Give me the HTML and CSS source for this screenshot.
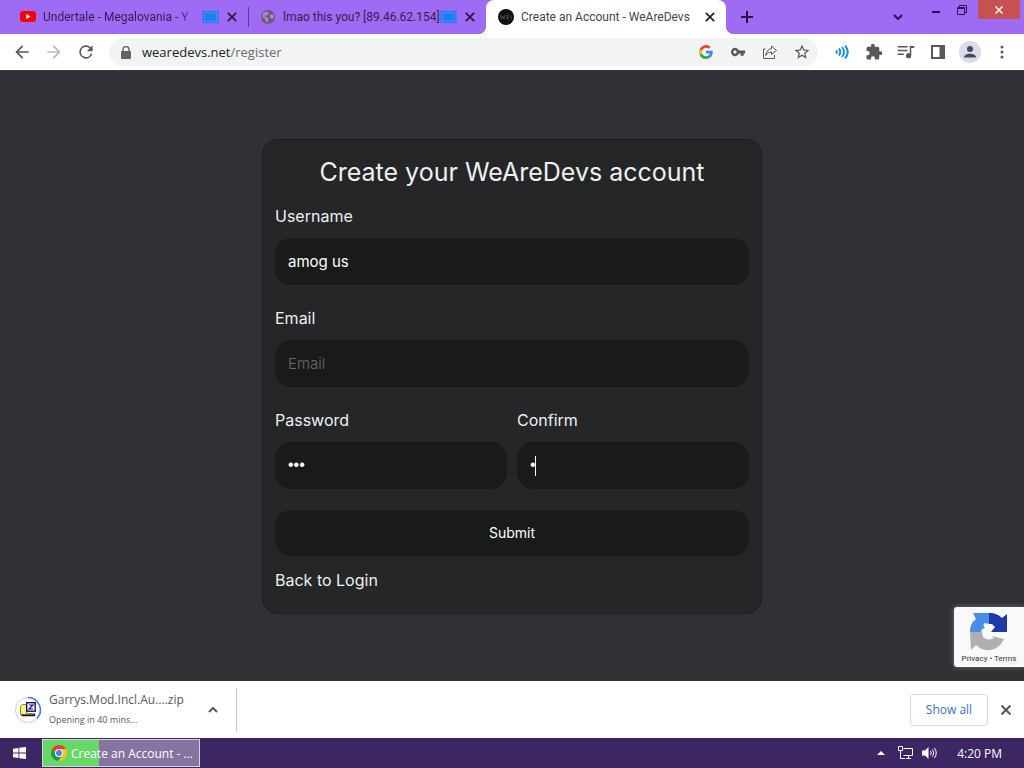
FILE: index.html
```html
<!DOCTYPE html>
<html lang="en">
<head>
<meta charset="UTF-8" />
<meta name="viewport" content="width=device-width, initial-scale=1" />
<title>Create an Account - WeAreDevs</title>
<link rel="stylesheet" href="styles.css">
</head>
<body>
  <!-- Tab strip -->
  <header class="tabstrip">
    <div class="tab">
      <svg class="favicon" viewBox="0 0 16 16"><rect y="2" width="16" height="11" rx="3" fill="#f00"/><path d="M6.3 5v5l4.2-2.500z" fill="#fff"/></svg>
      <span class="tab-title fade">Undertale - Megalovania - Y</span>
      <svg class="cast" viewBox="0 0 18 14"><rect x="1" y="1" width="16" height="12" fill="#1a7ff0" stroke="#1a7ff0"/><rect x="2.500" y="2.500" width="13" height="9" fill="none" stroke="#5b8cf5"/></svg>
      <button class="tab-close" aria-label="Close tab"><svg viewBox="0 0 10 10"><path d="M1.500 1.500l7 7M8.500 1.500l-7 7"/></svg></button>
    </div>
    <div class="tab tab-second">
      <svg class="favicon" viewBox="0 0 16 16"><circle cx="8" cy="8" r="7" fill="#6a5a80"/><path d="M3 4.500c2-2 3.500-2 4.500-1.500L9 5 6.500 6.500 5 6.300 4.500 7.500 8 9l.5 2L7 13.500 5.500 12 5 9.500 2.500 8zM10 6l3.500-.5.2 3L12 10l-2-1.500z" fill="#a88ec8"/></svg>
      <span class="tab-title">lmao this you? [89.46.62.154]</span>
      <svg class="cast" viewBox="0 0 18 14"><rect x="1" y="1" width="16" height="12" fill="#1a7ff0" stroke="#1a7ff0"/><rect x="2.500" y="2.500" width="13" height="9" fill="none" stroke="#5b8cf5"/></svg>
      <button class="tab-close" aria-label="Close tab"><svg viewBox="0 0 10 10"><path d="M1.500 1.500l7 7M8.500 1.500l-7 7"/></svg></button>
    </div>
    <div class="tab active">
      <svg class="favicon" viewBox="0 0 16 16"><circle cx="8" cy="8" r="8" fill="#111"/><path d="M2.500 6l1 4 1.200-3 1.200 3 1-4M9 6v4M9 6h2M9 8h2M9 10h2M12.500 6l1 4" stroke="#555" stroke-width=".8" fill="none"/></svg>
      <span class="tab-title">Create an Account - WeAreDevs</span>
      <button class="tab-close" aria-label="Close tab"><svg viewBox="0 0 10 10"><path d="M1.500 1.500l7 7M8.500 1.500l-7 7"/></svg></button>
    </div>
    <button class="new-tab" aria-label="New tab"><svg viewBox="0 0 12 12"><path d="M6 0v12M0 6h12"/></svg></button>
    <div class="window-controls">
      <button class="search-tabs" aria-label="Search tabs"><svg width="10" height="6" viewBox="0 0 10 6"><path d="M1 1l4 4 4-4"/></svg></button>
      <button aria-label="Minimize"><svg width="8" height="10" viewBox="0 0 8 10"><path d="M0 7h8"/></svg></button>
      <button aria-label="Restore"><svg width="10" height="10" viewBox="0 0 10 10"><path d="M.5 2.500h7v7h-7zM.5 3.500h7M2.500 2V.5h7v7H8" stroke-width="1"/></svg></button>
      <button class="win-close" aria-label="Close"><svg width="8" height="8" viewBox="0 0 8 8"><path d="M.5.5l7 7M7.500.5l-7 7"/></svg></button>
    </div>
  </header>

  <!-- Toolbar -->
  <nav class="toolbar">
    <button class="tool nav" aria-label="Back"><svg viewBox="0 0 24 24"><path d="M20 11H7.830l5.590-5.590L12 4l-8 8 8 8 1.410-1.410L7.830 13H20z"/></svg></button>
    <button class="tool nav off" aria-label="Forward"><svg viewBox="0 0 24 24"><path d="M4 11h12.170l-5.590-5.590L12 4l8 8-8 8-1.410-1.410L16.170 13H4z"/></svg></button>
    <button class="tool nav" aria-label="Reload"><svg viewBox="0 0 24 24"><path d="M17.650 6.350A8 8 0 1 0 19.730 14h-2.080A6 6 0 1 1 12 6c1.660 0 3.140.690 4.220 1.780L13 11h7V4z"/></svg></button>
    <div class="omnibox">
      <svg class="lock" viewBox="0 0 10 13"><path d="M2 6V3.500a3 3 0 0 1 6 0V6" fill="none" stroke="#5f6368" stroke-width="1.400"/><rect y="5" width="10" height="8" rx="1" fill="#5f6368"/></svg>
      <span class="url">wearedevs.net<span>/register</span></span>
      <button class="tool" aria-label="Search with Google"><svg class="small" viewBox="0 0 18 18"><path fill="#4285f4" d="M17.640 9.200c0-.640-.060-1.250-.160-1.840H9v3.480h4.840a4.140 4.140 0 0 1-1.800 2.720v2.260h2.910c1.700-1.570 2.690-3.880 2.690-6.620z"/><path fill="#34a853" d="M9 18c2.430 0 4.470-.8 5.960-2.180l-2.910-2.260c-.8.540-1.840.860-3.050.860-2.340 0-4.330-1.580-5.040-3.710H.960v2.330A9 9 0 0 0 9 18z"/><path fill="#fbbc05" d="M3.960 10.710a5.400 5.400 0 0 1 0-3.420V4.960H.960a9 9 0 0 0 0 8.080z"/><path fill="#ea4335" d="M9 3.580c1.320 0 2.510.450 3.440 1.350l2.580-2.590A9 9 0 0 0 .960 4.960l3 2.330C4.670 5.160 6.660 3.580 9 3.580z"/></svg></button>
      <button class="tool" aria-label="Manage passwords"><svg viewBox="0 0 24 24"><path d="M13.200 10A5.500 5.500 0 1 0 13.200 14H15.500v3h4v-3h2v-4zM8 14.200a2.200 2.200 0 1 1 0-4.400 2.200 2.200 0 0 1 0 4.400z"/></svg></button>
      <button class="tool" aria-label="Share"><svg class="line" viewBox="0 0 16 16"><path d="M3.500 5H1.500v9.500h11V11M9.500 2l5 4.500-5 4V8C7 8 5 9 3.800 11.500 4 7.500 6 5 9.500 4.700z"/></svg></button>
      <button class="tool" aria-label="Bookmark"><svg viewBox="0 0 24 24"><path d="M22 9.240l-7.190-.620L12 2 9.190 8.630 2 9.240l5.460 4.730L5.820 21 12 17.270 18.180 21l-1.630-7.030zM12 15.400l-3.760 2.270 1-4.280-3.320-2.880 4.380-.380L12 6.100l1.710 4.040 4.380.380-3.320 2.880 1 4.280z"/></svg></button>
    </div>
    <div class="extensions">
      <button class="tool" aria-label="Volume extension"><svg class="waves" viewBox="0 0 14 14"><path d="M1 5.500q1.500 1.500 0 3M3.800 3.500q3 3.500 0 7M7 2q4 5 0 10M10 .5q5.500 6.500 0 13"/></svg></button>
      <button class="tool" aria-label="Extensions"><svg viewBox="0 0 24 24"><path d="M20.500 11H19V7a2 2 0 0 0-2-2h-4V3.500a2.500 2.500 0 0 0-5 0V5H4a2 2 0 0 0-2 2v3.800h1.500a2.700 2.700 0 0 1 0 5.400H2V20a2 2 0 0 0 2 2h3.800v-1.500a2.700 2.700 0 0 1 5.400 0V22H17a2 2 0 0 0 2-2v-4h1.500a2.500 2.500 0 0 0 0-5z"/></svg></button>
      <button class="tool" aria-label="Media controls"><svg viewBox="0 0 24 24"><path d="M1 4h13v2H1zM1 9h13v2H1zM1 14h8v2H1zM17 4h6v2.500h-4V17a3.500 3.500 0 1 1-2-3.200z"/></svg></button>
      <button class="tool" aria-label="Side panel"><svg class="panel" viewBox="0 0 14 14"><path d="M0 0h14v14H0zM2 2v10h6.500V2z" fill-rule="evenodd"/></svg></button>
      <button class="tool" aria-label="Profile"><svg class="avatar" viewBox="0 0 22 22"><circle cx="11" cy="11" r="11" fill="#dadce6"/><circle cx="11" cy="8" r="3" fill="#3f4b5f"/><path d="M5 16.500c0-5 12-5 12 0z" fill="#3f4b5f"/></svg></button>
      <button class="tool" aria-label="Menu"><svg class="small" viewBox="0 0 14 14"><circle cx="7" cy="2" r="1.500"/><circle cx="7" cy="7" r="1.500"/><circle cx="7" cy="12" r="1.500"/></svg></button>
    </div>
  </nav>

  <!-- Page -->
  <main class="page">
    <form class="card" autocomplete="off">
      <h1>Create your WeAreDevs account</h1>

      <label for="username">Username</label>
      <input type="text" id="username" name="username" value="amog us" />

      <label for="email">Email</label>
      <input type="email" id="email" name="email" placeholder="Email" />

      <div class="row">
        <div>
          <label for="password">Password</label>
          <input type="password" id="password" name="password" value="abc" />
        </div>
        <div class="confirm">
          <label for="confirm">Confirm</label>
          <input type="password" id="confirm" name="confirm" value="a" />
          <span class="caret"></span>
        </div>
      </div>

      <button type="submit">Submit</button>
      <a class="back" href="#">Back to Login</a>
    </form>

    <aside class="recaptcha">
      <svg viewBox="0 0 40 40"><path d="M4 1h16v11l-4-1c-2 1-2 3 0 5l-3 1-1 3H1C1 14 3 10 7 7z" fill="#4a8de6"/><path d="M20 1c6 0 10 2 13 5l5-4v18H22l4-5-3-3-3 0z" fill="#1c3aa9"/><path d="M1 20h12l1 5c3 3 7 3 11 1l-2-2 12 3C30 39 16 42 7 33l-5 5z" fill="#b0b0b0"/></svg>
      <div><a href="#">Privacy</a> • <a href="#">Terms</a></div>
    </aside>
  </main>

  <!-- Downloads -->
  <section class="downloads">
    <div class="file">
      <svg class="file-icon" viewBox="0 0 28 28"><circle cx="13" cy="14" r="12.500" fill="#fff" stroke="#c3cff0"/><path d="M13 1.500a12.500 12.500 0 0 1 9 21" fill="none" stroke="#4f78d8" stroke-width="1.500"/><path d="M5.500 10.500l2-2h4v9h7v1h-13z" fill="#f4f080" stroke="#8a8a20"/><path d="M6.500 19.500h13v-2" fill="none" stroke="#111" stroke-width="1.300"/><rect x="11.700" y="6.700" width="8.500" height="8.500" fill="#fff" stroke="#101080" stroke-width="1.400"/><path d="M14 9h4l-4 4h4" fill="none" stroke="#101080" stroke-width="1.200"/></svg>
      <div class="file-text">
        <div class="file-name">Garrys.Mod.Incl.Au....zip</div>
        <div class="file-status">Opening in 40 mins...</div>
      </div>
      <button class="plain" aria-label="Download options"><svg width="10" height="6" viewBox="0 0 10 6"><path d="M1 5l4-4 4 4"/></svg></button>
    </div>
    <div class="download-actions">
      <button class="show-all">Show all</button>
      <button class="plain" aria-label="Close downloads"><svg width="10" height="10" viewBox="0 0 10 10"><path d="M.5.5l9 9M9.500.5l-9 9"/></svg></button>
    </div>
  </section>

  <!-- Taskbar -->
  <footer class="taskbar">
    <button class="start" aria-label="Start"><svg viewBox="0 0 13 12"><path d="M0 1.700l5.500-.8v4.700H0zM6.300.8L13 0v5.600H6.300zM0 6.400h5.500v4.700L0 10.300zM6.300 6.400H13V12l-6.700-.8z"/></svg></button>
    <button class="task">
      <svg viewBox="0 0 16 16"><circle cx="8" cy="8" r="8" fill="#fbc116"/><path d="M1.100 4A8 8 0 0 1 14.900 4H8a4 4 0 0 0-3.500 6z" fill="#db4437"/><path d="M1.100 4A8 8 0 0 0 7 16l4.500-6a4 4 0 0 1-7 0z" fill="#0f9d58"/><circle cx="8" cy="8" r="4" fill="#fff"/><circle cx="8" cy="8" r="3" fill="#4285f4"/></svg>
      <span>Create an Account - ...</span>
    </button>
    <div class="tray">
      <svg width="8" height="4" viewBox="0 0 8 4"><path d="M0 4l4-4 4 4z" fill="#fff"/></svg>
      <svg width="15" height="14" viewBox="0 0 15 14"><path d="M5.500 2.500h9v7h-9M8 12.500h5M10.500 10v2.500M.5.500h4v4h-4zM2.500 4.500v8H7" fill="none" stroke="#fff"/></svg>
      <svg width="15" height="14" viewBox="0 0 15 14"><path d="M0 4.500h3L6.500 1v12L3 9.500H0z" fill="#fff"/><path d="M8.500 5q1.500 2 0 4M10.500 3.500q2.500 3.500 0 7M12.500 2q3.500 5 0 10" fill="none" stroke="#fff"/></svg>
      <time>4:20 PM</time>
    </div>
  </footer>
</body>
</html>
```
FILE: styles.css
```css
:root {
  --purple: #9f6bf5;
  --taskbar: #3c2663;
  --page: #303136;
  --card: #242628;
  --field: #191b1a;
  --icon: #55585c;
}
* {
  box-sizing: border-box;
}
body {
  margin: 0;
  min-height: 100vh;
  display: flex;
  flex-direction: column;
  font-family: "Open Sans", "Noto Sans", sans-serif;
  font-size: 12px;
  background: var(--page);
}
button {
  font: inherit;
  padding: 0;
  border: 0;
  background: none;
}
svg {
  display: block;
  flex: none;
}

/* Tab strip */
.tabstrip {
  display: flex;
  height: 34px;
  background: var(--purple);
  font-family: Roboto, "Open Sans", sans-serif;
}
.tab {
  flex: 0 1 240px;
  min-width: 0;
  display: flex;
  align-items: center;
  padding: 0 10px 0 12px;
  color: #33204f;
}
.tab:first-child {
  flex-basis: 248px;
  padding-left: 20px;
}
.tab-second {
  flex-basis: 238px;
  background: linear-gradient(#5d3c99, #5d3c99) left center / 1px 20px no-repeat;
}
.tab.active {
  position: relative;
  background: #fff;
  border-radius: 8px 8px 0 0;
  color: #45464a;
}
/* curved feet of the active tab */
.tab.active::before,
.tab.active::after {
  content: "";
  position: absolute;
  bottom: 0;
  width: 8px;
  height: 8px;
}
.tab.active::before {
  left: -8px;
  background: radial-gradient(circle at 0 0, transparent 8px, #fff 8px);
}
.tab.active::after {
  right: -8px;
  background: radial-gradient(circle at 100% 0, transparent 8px, #fff 8px);
}
.favicon {
  width: 16px;
  height: 16px;
  margin-right: 7px;
}
.tab-title {
  flex: 1;
  min-width: 0;
  overflow: hidden;
  white-space: nowrap;
}
.fade {
  -webkit-mask-image: linear-gradient(90deg, #000 85%, transparent);
  mask-image: linear-gradient(90deg, #000 85%, transparent);
}
.cast {
  width: 17px;
  height: 14px;
  margin-right: 7px;
}
.tab-close svg {
  width: 12px;
  height: 12px;
  stroke: currentColor;
  stroke-width: 1.4;
}
.tab-close {
  color: #2a1838;
}
.new-tab {
  width: 42px;
}
.new-tab svg {
  width: 12px;
  margin: 0 auto;
  stroke: #24103f;
  stroke-width: 2;
}
.window-controls {
  margin-left: auto;
  display: flex;
  align-items: flex-start;
  padding-right: 4px;
}
.window-controls button {
  width: 26px;
  height: 19px;
  display: flex;
  align-items: center;
  justify-content: center;
}
.window-controls svg {
  fill: none;
  stroke: #2b1350;
  stroke-width: 2;
}
.window-controls .search-tabs {
  height: 34px;
  margin-right: 12px;
}
.window-controls .win-close {
  width: 42px;
  margin-left: 3px;
  background: #c75050;
}
.window-controls .win-close svg {
  stroke: #fff;
  stroke-width: 1.5;
}

/* Toolbar */
.toolbar {
  display: flex;
  align-items: center;
  height: 37px;
  padding: 0 6px;
  background: #fff;
  border-bottom: 1px solid #3a3b40;
}
.tool {
  width: 32px;
  height: 28px;
  display: flex;
  align-items: center;
  justify-content: center;
}
.tool svg {
  width: 18px;
  height: 18px;
  fill: var(--icon);
}
.tool.nav svg {
  width: 20px;
  height: 20px;
}
.tool.off svg {
  fill: #b9bbbe;
}
.tool .small,
.tool .waves,
.tool .panel {
  width: 14px;
  height: 14px;
}
.tool .line {
  width: 16px;
  fill: none;
  stroke: var(--icon);
}
.tool .waves {
  fill: none;
  stroke: #1e90e8;
  stroke-width: 2;
}
.tool .avatar {
  width: 22px;
  height: 22px;
}
.omnibox {
  flex: 1;
  min-width: 0;
  display: flex;
  align-items: center;
  height: 28px;
  margin: 0 8px 0 7px;
  padding-left: 12px;
  border-radius: 14px;
  background: #f1f3f4;
}
.lock {
  width: 10px;
  height: 13px;
  margin-right: 11px;
}
.url {
  flex: 1;
  font-size: 13px;
  color: #202124;
}
.url span {
  color: #6a6d71;
}
.extensions {
  display: flex;
}

/* Page */
.page {
  position: relative;
  flex: 1;
  display: flex;
  align-items: center;
  justify-content: center;
  padding: 20px;
  font-family: Inter, Roboto, sans-serif;
}
.card {
  width: 100%;
  max-width: 500px;
  padding: 12px 12px 21px;
  border: 1px solid #191b1d;
  border-radius: 16px;
  background: var(--card);
  color: #f0f0f0;
  font-size: 16px;
  line-height: 24px;
}
.card h1 {
  margin: 0 0 12px;
  font-size: 25px;
  line-height: 40px;
  font-weight: 400;
  text-align: center;
}
.card label {
  display: block;
  margin-bottom: 10px;
}
.card input,
.card button {
  display: block;
  width: 100%;
  height: 47px;
  padding: 0 13px;
  border: 0;
  border-radius: 16px;
  background: var(--field);
  color: #fff;
  font-family: inherit;
  font-size: 15px;
}
.card input {
  margin-bottom: 21px;
}
.card input::placeholder {
  color: #6b6c6c;
  font-weight: 300;
}
.card input[type="password"] {
  font-family: "Liberation Sans", Arial, sans-serif;
  font-size: 16px;
}
.card button {
  height: 46px;
  font-size: 14px;
}
.row {
  display: grid;
  grid-template-columns: 1fr 1fr;
  gap: 10px;
}
.confirm {
  position: relative;
}
.caret {
  position: absolute;
  left: 18px;
  bottom: 34px;
  width: 1px;
  height: 20px;
  background: #fff;
}
.back {
  display: inline-block;
  margin-top: 12px;
  color: inherit;
  text-decoration: none;
}
.recaptcha {
  position: absolute;
  right: 0;
  bottom: 14px;
  width: 70px;
  height: 60px;
  padding-top: 5px;
  border-radius: 3px 0 0 3px;
  background: #f9f9fa;
  box-shadow: 0 0 5px #777;
  font-family: Roboto, sans-serif;
  font-size: 8px;
  line-height: 14px;
  text-align: center;
  color: #333;
}
.recaptcha svg {
  width: 40px;
  height: 40px;
  margin: 0 auto;
}
.recaptcha a {
  color: inherit;
  text-decoration: none;
}

/* Downloads */
.downloads {
  display: flex;
  align-items: center;
  justify-content: space-between;
  height: 57px;
  background: #fff;
}
.file {
  display: flex;
  align-items: center;
  width: 237px;
  height: 44px;
  padding-left: 15px;
  border-right: 1px solid #c8c8cc;
}
.file-icon {
  width: 28px;
  height: 28px;
  margin-right: 6px;
}
.file-text {
  flex: 1;
  white-space: nowrap;
}
.file-name {
  font-size: 12px;
  line-height: 20px;
  color: #55585c;
}
.file-status {
  font-size: 9px;
  line-height: 20px;
  color: #55585c;
}
.plain {
  padding: 8px;
}
.plain svg {
  fill: none;
  stroke: #55585c;
  stroke-width: 2;
}
.file .plain {
  margin-right: 10px;
}
.download-actions {
  display: flex;
  align-items: center;
  gap: 5px;
  padding-right: 5px;
}
.show-all {
  width: 78px;
  height: 32px;
  border: 1px solid #d6d8dc;
  border-radius: 4px;
  color: #3f6fb8;
}

/* Taskbar */
.taskbar {
  display: flex;
  align-items: center;
  height: 30px;
  background: var(--taskbar);
  color: #fff;
}
.start {
  width: 42px;
}
.start svg {
  width: 13px;
  margin-left: 13px;
  fill: #fff;
}
.task {
  display: flex;
  align-items: center;
  gap: 4px;
  width: 158px;
  height: 28px;
  padding: 0 8px;
  border: 1px solid #d9d3e4;
  background: linear-gradient(90deg, #66d866 56px, #84749f 56px);
  color: #fff;
  white-space: nowrap;
}
.task svg {
  width: 16px;
  height: 16px;
}
.tray {
  display: flex;
  align-items: center;
  gap: 9px;
  margin-left: auto;
  padding-right: 22px;
}
.tray svg:first-child {
  margin-right: 4px;
}
.tray time {
  margin-left: 11px;
}
```
